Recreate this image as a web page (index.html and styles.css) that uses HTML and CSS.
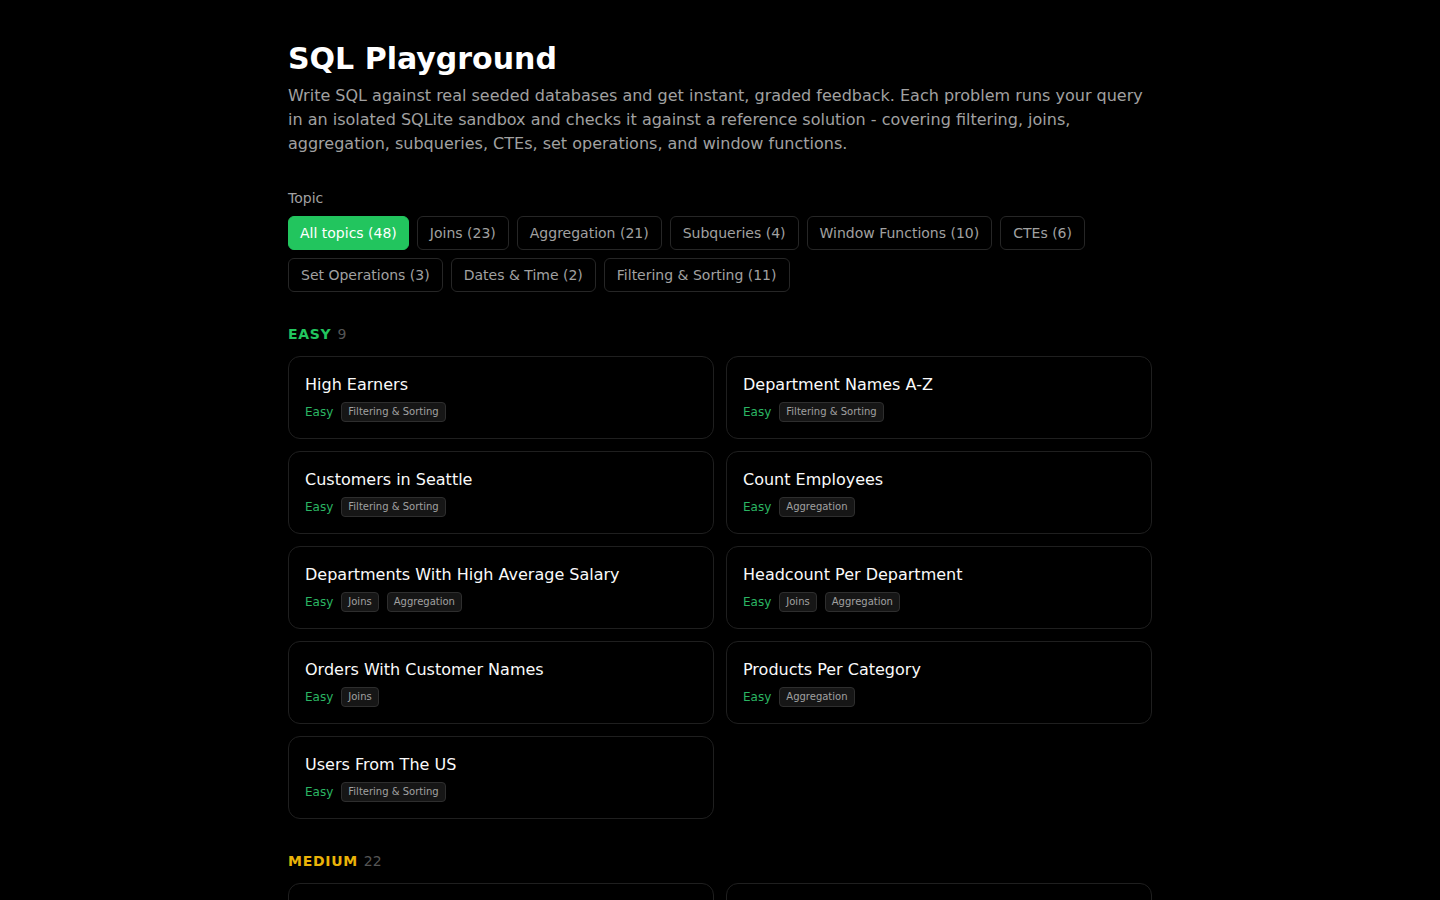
FILE: index.html
```html
<!DOCTYPE html>
<html lang="en">
<head>
<meta charset="utf-8">
<title>SQL Playground</title>
<link rel="stylesheet" href="styles.css">
</head>
<body>
<main class="page">
  <header class="intro">
    <h1 class="title">SQL Playground</h1>
    <p class="lead">Write SQL against real seeded databases and get instant, graded feedback. Each problem runs your query in an isolated SQLite sandbox and checks it against a reference solution - covering filtering, joins, aggregation, subqueries, CTEs, set operations, and window functions.</p>
  </header>

  <section class="filters">
    <div class="filter-label">Topic</div>
    <div class="chips">
      <button class="chip chip-active">All topics (48)</button>
      <button class="chip">Joins (23)</button>
      <button class="chip">Aggregation (21)</button>
      <button class="chip">Subqueries (4)</button>
      <button class="chip">Window Functions (10)</button>
      <button class="chip">CTEs (6)</button>
      <button class="chip">Set Operations (3)</button>
      <button class="chip">Dates &amp; Time (2)</button>
      <button class="chip">Filtering &amp; Sorting (11)</button>
    </div>
  </section>

  <section class="group">
    <h2 class="group-head"><span class="level level-easy">EASY</span><span class="count">9</span></h2>
    <div class="grid">
      <a class="card"><div class="card-title">High Earners</div><div class="meta"><span class="diff diff-easy">Easy</span><span class="tag">Filtering &amp; Sorting</span></div></a>
      <a class="card"><div class="card-title">Department Names A-Z</div><div class="meta"><span class="diff diff-easy">Easy</span><span class="tag">Filtering &amp; Sorting</span></div></a>
      <a class="card"><div class="card-title">Customers in Seattle</div><div class="meta"><span class="diff diff-easy">Easy</span><span class="tag">Filtering &amp; Sorting</span></div></a>
      <a class="card"><div class="card-title">Count Employees</div><div class="meta"><span class="diff diff-easy">Easy</span><span class="tag">Aggregation</span></div></a>
      <a class="card"><div class="card-title">Departments With High Average Salary</div><div class="meta"><span class="diff diff-easy">Easy</span><span class="tag">Joins</span><span class="tag">Aggregation</span></div></a>
      <a class="card"><div class="card-title">Headcount Per Department</div><div class="meta"><span class="diff diff-easy">Easy</span><span class="tag">Joins</span><span class="tag">Aggregation</span></div></a>
      <a class="card"><div class="card-title">Orders With Customer Names</div><div class="meta"><span class="diff diff-easy">Easy</span><span class="tag">Joins</span></div></a>
      <a class="card"><div class="card-title">Products Per Category</div><div class="meta"><span class="diff diff-easy">Easy</span><span class="tag">Aggregation</span></div></a>
      <a class="card"><div class="card-title">Users From The US</div><div class="meta"><span class="diff diff-easy">Easy</span><span class="tag">Filtering &amp; Sorting</span></div></a>
    </div>
  </section>

  <section class="group">
    <h2 class="group-head"><span class="level level-medium">MEDIUM</span><span class="count">22</span></h2>
    <div class="grid">
      <a class="card"><div class="card-title">Second Highest Salary</div><div class="meta"><span class="diff diff-medium">Medium</span><span class="tag">Subqueries</span></div></a>
      <a class="card"><div class="card-title">Running Total of Orders</div><div class="meta"><span class="diff diff-medium">Medium</span><span class="tag">Window Functions</span></div></a>
      <a class="card"><div class="card-title">Customers Without Orders</div><div class="meta"><span class="diff diff-medium">Medium</span><span class="tag">Joins</span></div></a>
      <a class="card"><div class="card-title">Monthly Revenue</div><div class="meta"><span class="diff diff-medium">Medium</span><span class="tag">Dates &amp; Time</span><span class="tag">Aggregation</span></div></a>
    </div>
  </section>
</main>
</body>
</html>
```

FILE: styles.css
```css
* { box-sizing: border-box; }

html, body {
  margin: 0;
  padding: 0;
  background: #000;
  color: #fafafa;
  font-family: "DejaVu Sans", "Liberation Sans", sans-serif;
}

.page {
  max-width: 896px;
  margin: 0 auto;
  padding: 41px 16px 48px;
}

.title {
  margin: 0;
  font-size: 30px;
  line-height: 36px;
  font-weight: 700;
  color: #fff;
}

.lead {
  margin: 7px 0 0;
  font-size: 16px;
  line-height: 24px;
  color: #a1a1a1;
}

.filters {
  margin-top: 32px;
}

.filter-label {
  font-size: 14px;
  line-height: 20px;
  color: #a1a1a1;
  margin-bottom: 8px;
}

.chips {
  display: flex;
  flex-wrap: wrap;
  gap: 8px;
}

.chip {
  font-family: inherit;
  font-size: 14px;
  line-height: 20px;
  padding: 6px 12px;
  border: 1px solid #262626;
  border-radius: 6px;
  background: #000;
  color: #a1a1a1;
  cursor: pointer;
}

.chip-active {
  padding: 6px 11px;
  background: #22c55e;
  border-color: #22c55e;
  color: #fff;
}

.group {
  margin-top: 32px;
}

.group-head {
  margin: 0 0 12px;
  display: flex;
  align-items: baseline;
  gap: 6px;
  font-size: 14px;
  line-height: 20px;
}

.level {
  font-weight: 700;
  letter-spacing: 0.05em;
}

.level-easy { color: #22c55e; }
.level-medium { color: #eab308; }

.count {
  font-weight: 400;
  color: #555;
}

.grid {
  display: grid;
  grid-template-columns: 1fr 1fr;
  gap: 12px;
}

.card {
  display: block;
  border: 1px solid #1f1f1f;
  border-radius: 12px;
  padding: 16px;
  background: #000;
  color: inherit;
  text-decoration: none;
}

.card-title {
  font-size: 16px;
  line-height: 24px;
  color: #fafafa;
}

.meta {
  margin-top: 5px;
  display: flex;
  align-items: center;
  gap: 8px;
}

.diff {
  font-size: 12px;
  line-height: 16px;
}

.diff-easy { color: #2bb563; }
.diff-medium { color: #e0a810; }

.tag {
  font-size: 10px;
  line-height: 16px;
  padding: 1px 6px;
  border: 1px solid #2e2e2e;
  border-radius: 4px;
  background: #161616;
  color: #a1a1a1;
}
```
